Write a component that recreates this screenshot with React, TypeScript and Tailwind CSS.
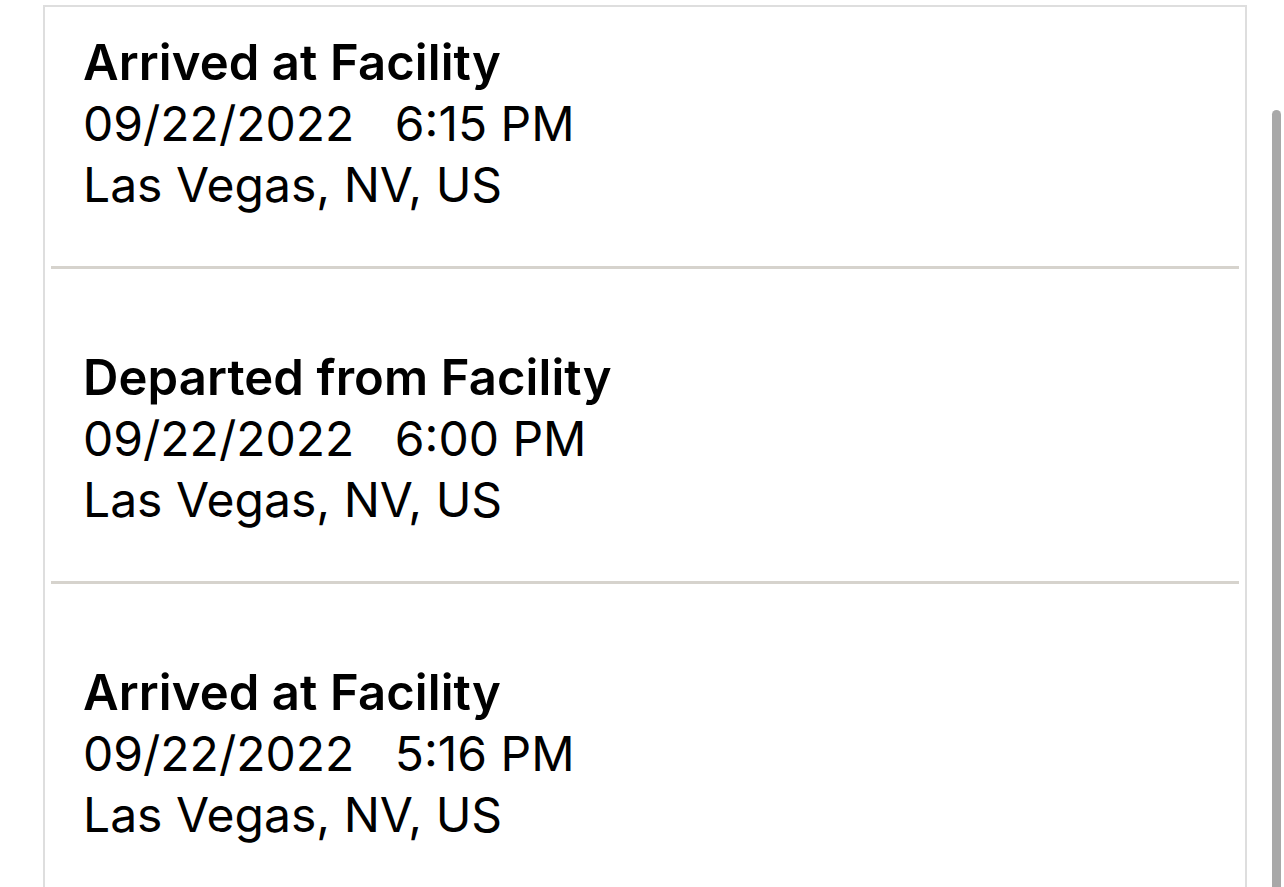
const events = [
  { title: 'Arrived at Facility', date: '09/22/2022', time: '6:15 PM', place: 'Las Vegas, NV, US' },
  { title: 'Departed from Facility', date: '09/22/2022', time: '6:00 PM', place: 'Las Vegas, NV, US' },
  { title: 'Arrived at Facility', date: '09/22/2022', time: '5:16 PM', place: 'Las Vegas, NV, US' },
];

export default function App() {
  return (
    <div className="h-[887px] w-full overflow-hidden bg-white flex font-['Inter',sans-serif] text-black">
      <div className="ml-[43px] mt-[5px] w-[1204px] border-2 border-b-0 border-[#dedede]">
        {events.map((e, i) => (
          <div key={i}>
            {i > 0 && <div className="mx-[6px] h-[3px] bg-[#d6d3cd]" />}
            <div className={i === 0 ? 'pl-[38px] pt-[25px] pb-[51px]' : 'pl-[38px] pt-[78px] pb-[51px]'}>
              <div className="text-[49px] leading-[61px] font-semibold tracking-[0.002em]">{e.title}</div>
              <div className="text-[48px] leading-[61px] whitespace-pre">{e.date + '   ' + e.time}</div>
              <div className="text-[48px] leading-[61px]">{e.place}</div>
            </div>
          </div>
        ))}
      </div>
      <div className="ml-[25px] mt-[110px] w-[9px] h-[800px] rounded-t-full bg-[#a8a8a8]" />
    </div>
  );
}
